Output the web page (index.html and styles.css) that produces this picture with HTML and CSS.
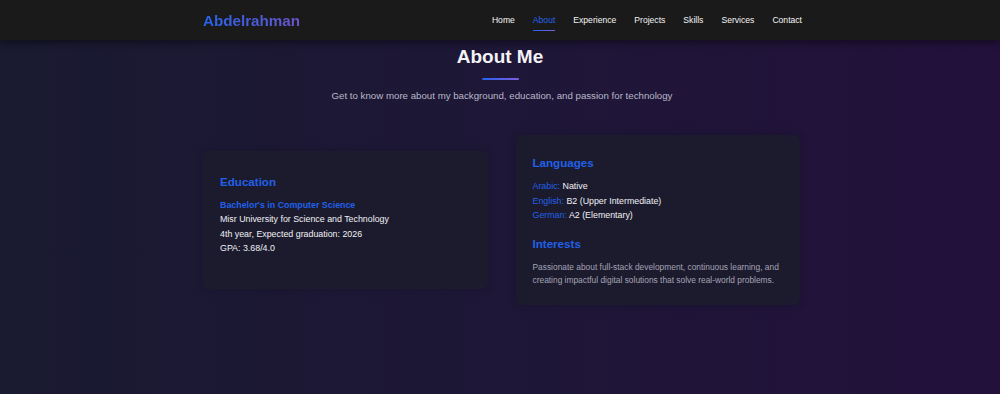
FILE: index.html
```html
<!DOCTYPE html>
<html lang="en">
<head>
    <meta charset="UTF-8">
    <meta name="viewport" content="width=device-width, initial-scale=1.0">
    <title>Abdelrahman - About</title>
    <link rel="stylesheet" href="styles.css">
</head>
<body>
    <nav class="navbar">
        <div class="nav-inner">
            <a href="#" class="logo">Abdelrahman</a>
            <ul class="nav-links">
                <li><a href="#home">Home</a></li>
                <li><a href="#about" class="active">About</a></li>
                <li><a href="#experience">Experience</a></li>
                <li><a href="#projects">Projects</a></li>
                <li><a href="#skills">Skills</a></li>
                <li><a href="#services">Services</a></li>
                <li><a href="#contact">Contact</a></li>
            </ul>
        </div>
    </nav>

    <section id="about" class="section">
        <div class="section-header">
            <h2 class="section-title">About Me</h2>
            <div class="title-bar"></div>
            <p class="section-subtitle">Get to know more about my background, education, and passion for technology</p>
        </div>

        <div class="about-grid">
            <div class="about-card education">
                <h3>Education</h3>
                <p class="degree">Bachelor's in Computer Science</p>
                <p>Misr University for Science and Technology</p>
                <p>4th year, Expected graduation: 2026</p>
                <p>GPA: 3.68/4.0</p>
            </div>

            <div class="about-card">
                <h3>Languages</h3>
                <p><span class="label">Arabic:</span> Native</p>
                <p><span class="label">English:</span> B2 (Upper Intermediate)</p>
                <p><span class="label">German:</span> A2 (Elementary)</p>

                <h3 class="spaced">Interests</h3>
                <p class="muted">Passionate about full-stack development, continuous learning, and creating impactful digital solutions that solve real-world problems.</p>
            </div>
        </div>
    </section>
</body>
</html>
```

FILE: styles.css
```css
* {
    box-sizing: border-box;
}

body {
    margin: 0;
    min-height: 394px;
    font-family: "Liberation Sans", Arial, sans-serif;
    color: #f1f1f5;
    background: linear-gradient(90deg, #1a1a31 0%, #1e1737 50%, #23113b 100%);
}

.navbar {
    height: 40px;
    background: #1a1a1a;
    box-shadow: 0 2px 8px rgba(0, 0, 0, 0.5);
    position: relative;
    z-index: 10;
}

.nav-inner {
    max-width: 600px;
    height: 100%;
    margin: 0 auto;
    display: flex;
    align-items: center;
    justify-content: space-between;
    padding-left: 3px;
}

.logo {
    font-size: 15.2px;
    font-weight: bold;
    text-decoration: none;
    background: linear-gradient(90deg, #2563eb, #6b55cc);
    -webkit-background-clip: text;
    background-clip: text;
    color: transparent;
}

.nav-links {
    display: flex;
    gap: 18px;
    list-style: none;
    margin: 0 -2px 0 0;
    padding: 0;
}

.nav-links a {
    display: block;
    position: relative;
    font-size: 8.6px;
    color: #f5f5f5;
    text-decoration: none;
    padding: 2px 0;
}

.nav-links a.active {
    color: #2563eb;
}

/* underline under the current page */
.nav-links a.active::after {
    content: "";
    position: absolute;
    left: 0;
    right: 0;
    bottom: -4px;
    height: 1px;
    background: linear-gradient(90deg, #2563eb, #7c5ce0);
}

.section {
    padding: 6px 0 40px;
}

.section-header {
    text-align: center;
}

.section-title {
    margin: 0;
    font-size: 19px;
    font-weight: bold;
    color: #f3f3f7;
}

.title-bar {
    width: 37px;
    height: 2px;
    margin: 10px auto 0;
    border-radius: 2px;
    background: linear-gradient(90deg, #2563eb, #7b5ee0);
}

.section-subtitle {
    margin: 10px 0 0;
    padding-left: 4px;
    font-size: 9.7px;
    color: #b9b8c8;
}

.about-grid {
    max-width: 600px;
    margin: 34px auto 0;
    display: grid;
    grid-template-columns: 1fr 1fr;
    gap: 28px;
    align-items: center;
    padding-left: 3px;
}

.about-card {
    background: #1c1b2d;
    border-radius: 6px;
    padding: 21px 17px 17px;
    box-shadow: 0 0 6px rgba(20, 18, 40, 0.6);
}

.about-card.education {
    padding: 24px 17px 33px;
}

.about-card h3 {
    margin: 0 0 10px;
    font-size: 11.6px;
    font-weight: bold;
    color: #2160e8;
}

.about-card h3.spaced {
    margin-top: 14px;
}

.about-card p {
    margin: 0;
    font-size: 8.85px;
    line-height: 14.5px;
    color: #f1f1f5;
}

.about-card p.degree {
    color: #2160e8;
    font-weight: bold;
}

.about-card .label {
    color: #2160e8;
}

.about-card p.muted {
    font-size: 8.4px;
    line-height: 13.5px;
    color: #a4a3b6;
    margin-top: 11px;
}
```
